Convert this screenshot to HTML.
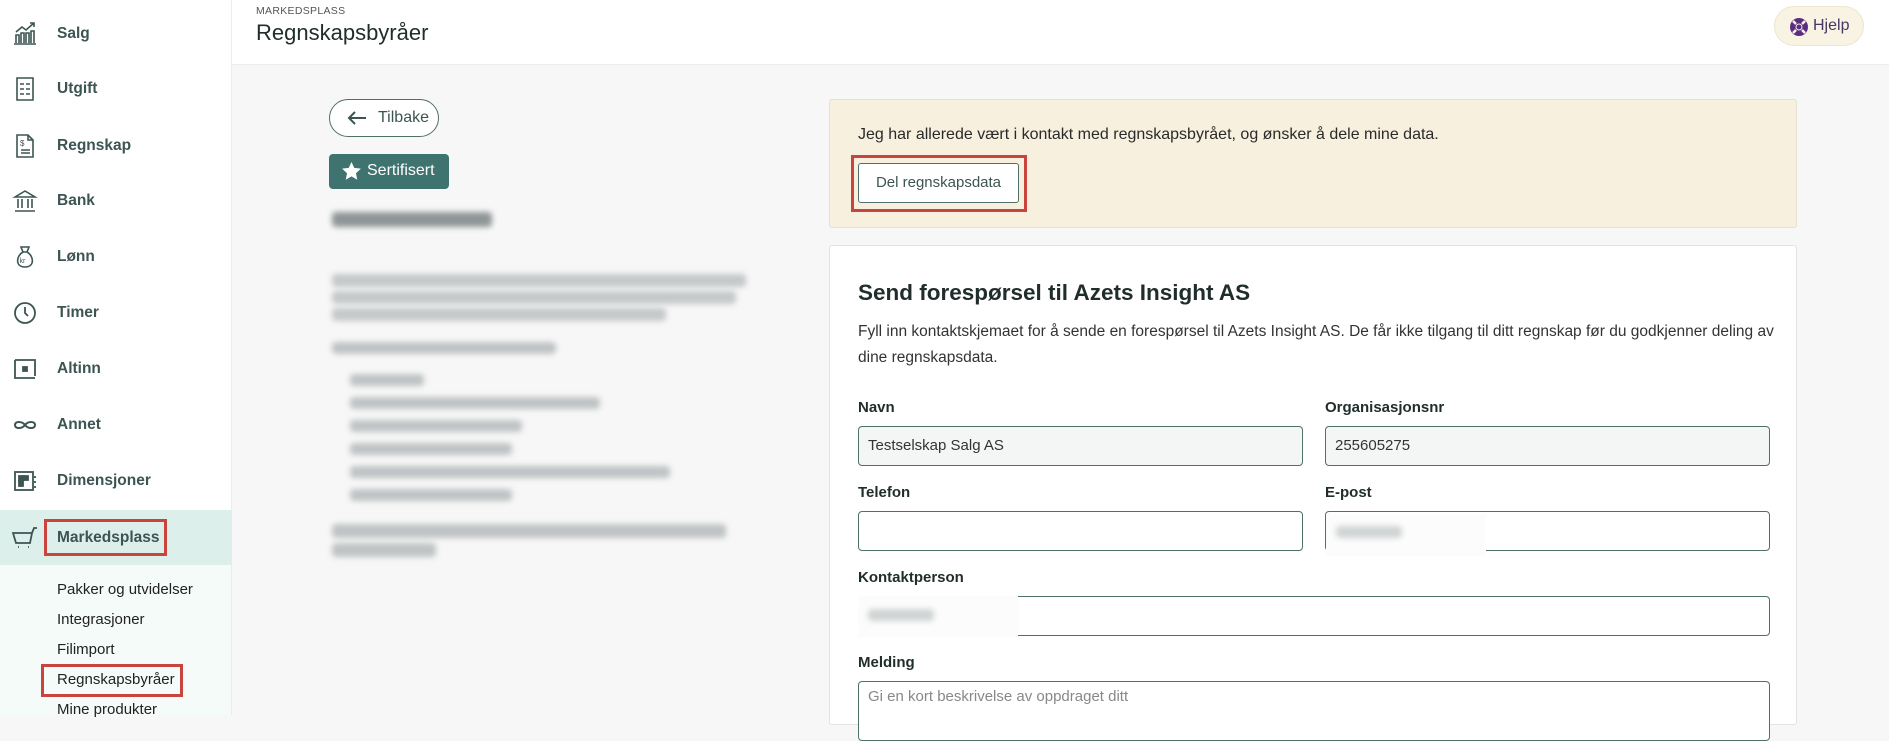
<!DOCTYPE html>
<html><head><meta charset="utf-8"><style>
*{box-sizing:border-box;margin:0;padding:0}
body{width:1889px;height:715px;overflow:hidden;background:#f7f7f7;font-family:"Liberation Sans",sans-serif;position:relative;color:#1f2d2b}
.abs{position:absolute}
#side{left:0;top:0;width:232px;height:715px;background:#fff;border-right:1px solid #ececec}
.item{position:absolute;left:0;width:232px;height:56px;display:flex;align-items:center}
.item svg{position:absolute;left:12px;width:26px;height:26px}
.item span{position:absolute;left:57px;font-size:15.5px;font-weight:bold;color:#3c5552}
.sub{position:absolute;left:57px;font-size:15px;color:#222}
.red{position:absolute;border:3px solid #c9443d}
#hdr{left:232px;top:0;width:1657px;height:65px;background:#fff;border-bottom:1px solid #ececec}
.blur{position:absolute;background:#bfc3c4;filter:blur(3px);height:12px;border-radius:4px}
label{position:absolute;font-size:15px;font-weight:bold;color:#1f2d2b}
.inp{position:absolute;height:40px;border:1.5px solid #4f6f6b;border-radius:4px;background:#fff;font-size:15px;color:#333;padding:10px 9px;white-space:nowrap}
</style></head><body>
<div id="side" class="abs">
 <div class="item" style="top:6px"><svg viewBox="0 0 26 26" fill="none" stroke="#3c5552" stroke-width="1.6"><path d="M2 23h22M4 22v-8h3v8M9 22v-10h3v10M14 22v-10h3v10M19 22v-12h3v12M4 11l6-5 4 3 8-7M18 2h4v4"/></svg><span>Salg</span></div>
 <div class="item" style="top:61px"><svg viewBox="0 0 26 26" fill="none" stroke="#3c5552" stroke-width="1.6"><path d="M5 2h16v22H5zM8 8h4M14 8h4M8 13h4M14 13h4M8 18h4M14 18h4"/></svg><span>Utgift</span></div>
 <div class="item" style="top:118px"><svg viewBox="0 0 26 26" fill="none" stroke="#3c5552" stroke-width="1.6"><path d="M5 2h11l5 5v17H5zM16 2v5h5M9 17h9M9 20h9"/><text x="8" y="13" font-size="8" fill="#3c5552" stroke="none">$</text></svg><span>Regnskap</span></div>
 <div class="item" style="top:173px"><svg viewBox="0 0 26 26" fill="none" stroke="#3c5552" stroke-width="1.6"><path d="M3 9l10-6 10 6zM6 11v9M10 11v9M16 11v9M20 11v9M3 23h20"/></svg><span>Bank</span></div>
 <div class="item" style="top:229px"><svg viewBox="0 0 26 26" fill="none" stroke="#3c5552" stroke-width="1.6"><path d="M9 3h8l-2 5h-4zM11 8C4 12 3 23 13 23s9-11 2-15"/><text x="7.5" y="19" font-size="7" fill="#3c5552" stroke="none">kr</text></svg><span>Lønn</span></div>
 <div class="item" style="top:285px"><svg viewBox="0 0 26 26" fill="none" stroke="#3c5552" stroke-width="1.8"><circle cx="13" cy="13" r="10"/><path d="M13 7v6l3 3"/></svg><span>Timer</span></div>
 <div class="item" style="top:341px"><svg viewBox="0 0 26 26" fill="none" stroke="#3c5552" stroke-width="1.8"><path d="M3 4v18h20M3 4h20v16"/><rect x="11" y="11" width="4" height="4" fill="#3c5552"/></svg><span>Altinn</span></div>
 <div class="item" style="top:397px"><svg viewBox="0 0 26 26" fill="none" stroke="#3c5552" stroke-width="2"><path d="M13 13c-3-4-10-4-10 0s7 4 10 0 10-4 10 0-7 4-10 0"/></svg><span>Annet</span></div>
 <div class="item" style="top:453px"><svg viewBox="0 0 26 26" fill="none" stroke="#3c5552" stroke-width="1.8"><rect x="3" y="4" width="18" height="18"/><rect x="7" y="8" width="4" height="4" fill="#3c5552"/><rect x="12" y="8" width="4" height="4" fill="#3c5552"/><rect x="7" y="13" width="4" height="5" fill="#3c5552"/><path d="M23 8v2M23 13v2M23 18v2"/></svg><span>Dimensjoner</span></div>
 <div class="item" style="top:510px;height:55px;background:#dcefeb"><svg viewBox="0 0 26 26" fill="none" stroke="#3c5552" stroke-width="1.8"><path d="M1 8h19l-2 10H4zM20 8l2-5h3M6 22h1M16 22h1"/></svg><span>Markedsplass</span></div>
 <div class="abs" style="left:0;top:565px;width:231px;height:150px;background:#f5fbf9"></div>
 <div class="sub" style="top:581px">Pakker og utvidelser</div>
 <div class="sub" style="top:611px">Integrasjoner</div>
 <div class="sub" style="top:641px">Filimport</div>
 <div class="sub" style="top:671px">Regnskapsbyråer</div>
 <div class="sub" style="top:701px">Mine produkter</div>
 <div class="red" style="left:44px;top:519px;width:123px;height:37px"></div>
 <div class="red" style="left:41px;top:664px;width:142px;height:33px"></div>
</div>
<div id="hdr" class="abs">
 <div class="abs" style="left:24px;top:5px;font-size:10.5px;color:#555;letter-spacing:.3px">MARKEDSPLASS</div>
 <div class="abs" style="left:24px;top:20px;font-size:22px;color:#1f2d2b">Regnskapsbyråer</div>
 <div class="abs" style="left:1542px;top:6px;width:90px;height:40px;border:1px solid #efe6cf;background:#f9f3e3;border-radius:20px;font-size:16px;color:#4a3466;padding:10px 0 0 38px">Hjelp
  <svg class="abs" style="left:14px;top:10px" width="20" height="20" viewBox="0 0 20 20"><circle cx="10" cy="10" r="9" fill="#5b2d82"/><circle cx="10" cy="10" r="3.5" fill="#f9f3e3"/><path d="M4 4l3 3M16 4l-3 3M4 16l3-3M16 16l-3-3" stroke="#f9f3e3" stroke-width="2.5"/><circle cx="10" cy="10" r="2.5" fill="#5b2d82"/></svg></div>
</div>
<div class="abs" style="left:329px;top:99px;width:110px;height:38px;border:1.5px solid #4f6f6b;border-radius:19px;background:#fff;font-size:16px;color:#3c5552;padding:9px 0 0 48px">Tilbake
 <svg class="abs" style="left:17px;top:11px" width="20" height="14" viewBox="0 0 20 14" fill="none" stroke="#3c5552" stroke-width="2"><path d="M19 7H2M8 1L2 7l6 6"/></svg></div>
<div class="abs" style="left:329px;top:154px;width:120px;height:35px;background:#3f7370;border-radius:4px;color:#fff;font-size:16px;padding:8px 0 0 38px">Sertifisert
 <svg class="abs" style="left:13px;top:8px" width="19" height="18" viewBox="0 0 24 23"><path d="M12 0l3.5 7.5 8.5 1-6.3 5.8 1.7 8.4L12 18.4 4.6 22.7l1.7-8.4L0 8.5l8.5-1z" fill="#fff"/></svg></div>
<div class="blur" style="left:332px;top:212px;width:160px;height:15px;background:#8f9596"></div>
<div class="blur" style="left:332px;top:274px;width:414px;height:13px;background:#c4c8c9"></div>
<div class="blur" style="left:332px;top:291px;width:404px;height:13px;background:#c4c8c9"></div>
<div class="blur" style="left:332px;top:308px;width:334px;height:13px;background:#c4c8c9"></div>
<div class="blur" style="left:332px;top:342px;width:224px"></div>
<div class="blur" style="left:350px;top:374px;width:74px"></div>
<div class="blur" style="left:350px;top:397px;width:250px"></div>
<div class="blur" style="left:350px;top:420px;width:172px"></div>
<div class="blur" style="left:350px;top:443px;width:162px"></div>
<div class="blur" style="left:350px;top:466px;width:320px"></div>
<div class="blur" style="left:350px;top:489px;width:162px"></div>
<div class="blur" style="left:332px;top:524px;width:394px;height:14px"></div>
<div class="blur" style="left:332px;top:543px;width:104px;height:14px"></div>

<div class="abs" style="left:829px;top:99px;width:968px;height:129px;background:#f7f0df;border:1px solid #e6e0d0;border-radius:3px">
 <div class="abs" style="left:28px;top:26px;font-size:16px;color:#2a2a2a">Jeg har allerede vært i kontakt med regnskapsbyrået, og ønsker å dele mine data.</div>
 <div class="abs" style="left:28px;top:63px;width:161px;height:40px;background:#fff;border:1.5px solid #4f6f6b;border-radius:3px;font-size:15px;color:#3c5552;text-align:center;padding-top:10px;white-space:nowrap">Del regnskapsdata</div>
 <div class="red" style="left:21px;top:55px;width:176px;height:57px"></div>
</div>
<div class="abs" style="left:829px;top:245px;width:968px;height:480px;background:#fff;border:1px solid #e3e3e3;border-radius:3px">
 <div class="abs" style="left:28px;top:34px;font-size:22.5px;font-weight:bold;color:#1f2d2b">Send forespørsel til Azets Insight AS</div>
 <div class="abs" style="left:28px;top:73px;width:925px;font-size:15.5px;line-height:26px;color:#333">Fyll inn kontaktskjemaet for å sende en forespørsel til Azets Insight AS. De får ikke tilgang til ditt regnskap før du godkjenner deling av dine regnskapsdata.</div>
</div>
<label style="left:858px;top:399px">Navn</label>
<label style="left:1325px;top:399px">Organisasjonsnr</label>
<div class="inp" style="left:858px;top:426px;width:445px;background:#f4f6f6">Testselskap Salg AS</div>
<div class="inp" style="left:1325px;top:426px;width:445px;background:#f4f6f6">255605275</div>
<label style="left:858px;top:484px">Telefon</label>
<label style="left:1325px;top:484px">E-post</label>
<div class="inp" style="left:858px;top:511px;width:445px"></div>
<div class="inp" style="left:1325px;top:511px;width:445px"></div>
<div class="abs" style="left:1326px;top:514px;width:160px;height:42px;background:#fcfcfc"></div>
<div class="blur" style="left:1336px;top:526px;width:66px;background:#d0d3d3"></div>
<label style="left:858px;top:569px">Kontaktperson</label>
<div class="inp" style="left:858px;top:596px;width:912px"></div>
<div class="abs" style="left:858px;top:596px;width:160px;height:42px;background:#fcfcfc"></div>
<div class="blur" style="left:868px;top:609px;width:66px;background:#d0d3d3"></div>
<label style="left:858px;top:654px">Melding</label>
<div class="inp" style="left:858px;top:681px;width:912px;height:60px;color:#888;padding-top:6px">Gi en kort beskrivelse av oppdraget ditt</div>
</body></html>
